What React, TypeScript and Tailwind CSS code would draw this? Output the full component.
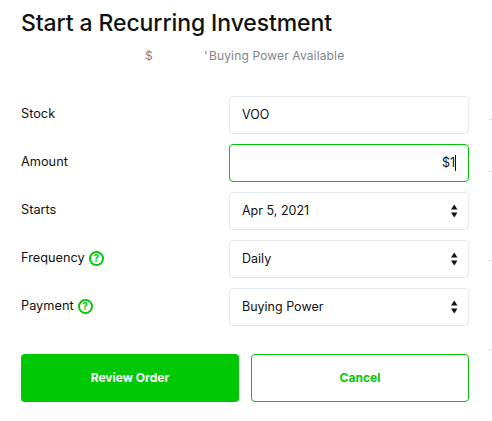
function Arrows() {
	return (
		<svg width="8" height="14" viewBox="0 0 8 14" className="shrink-0">
			<path d="M4.25 0.5 L7.5 5.5 H1 Z" fill="#111" />
			<path d="M4.25 13.5 L7.5 8.5 H1 Z" fill="#111" />
		</svg>
	);
}

function Help() {
	return (
		<span className="ml-[4px] flex h-[15px] w-[15px] items-center justify-center rounded-full border-2 border-[#00c805] text-[10px] font-bold leading-none text-[#00c805]">
			?
		</span>
	);
}

function Row({
	label,
	help,
	children,
}: {
	label: string;
	help?: boolean;
	children: React.ReactNode;
}) {
	return (
		<div className="flex h-[38px] items-center justify-between">
			<div className="flex items-center pb-[2px] text-[12.75px] text-[#111]">
				{label}
				{help && <Help />}
			</div>
			{children}
		</div>
	);
}

function Select({ value }: { value: string }) {
	return (
		<div className="flex h-[38px] w-[240px] items-center justify-between rounded border border-[#e3e9ed] pl-3 pr-[10px] text-[12.5px] text-[#111]">
			<span>{value}</span>
			<Arrows />
		</div>
	);
}

export default function App() {
	return (
		<div
			className="relative h-[421px] w-[492px] overflow-hidden bg-white pl-[21px] pr-[23px] pt-[8px]"
			style={{ fontFamily: "Inter, sans-serif" }}
		>
			<h1 className="text-[23px] font-[450] leading-[30px] tracking-[-0.1px] text-[#111]">
				Start a Recurring Investment
			</h1>
			<div className="mt-[9px] flex h-[18px] items-center text-[12px] tracking-[0.14px] text-[#7c868c]">
				<span className="ml-[124px] w-[59px]">$</span>
				<span className="w-[5px]">'</span>
				<span>Buying Power Available</span>
			</div>
			<div className="mt-[31px] flex flex-col gap-[10px]">
				<Row label="Stock">
					<div className="flex h-[38px] w-[240px] items-center rounded border border-[#e3e9ed] px-3 text-[12.5px] text-[#111]">
						VOO
					</div>
				</Row>
				<Row label="Amount">
					<div className="flex h-[38px] w-[240px] items-center justify-end rounded border border-[#00c805] pr-3 text-[12.5px] text-[#111]">
						$1
						<span className="h-[16px] w-px bg-[#111]" />
					</div>
				</Row>
				<Row label="Starts">
					<Select value="Apr 5, 2021" />
				</Row>
				<Row label="Frequency" help>
					<Select value="Daily" />
				</Row>
				<Row label="Payment" help>
					<Select value="Buying Power" />
				</Row>
			</div>
			<div className="mt-[28px] flex justify-between">
				<button className="h-[48px] w-[218px] rounded bg-[#00c805] text-[12px] font-bold text-white">
					Review Order
				</button>
				<button className="h-[48px] w-[218px] rounded border border-[#00c805] bg-white text-[12px] font-bold text-[#00c805]">
					Cancel
				</button>
			</div>
			{/* stray tick marks on the right edge */}
			<span className="absolute left-[489px] top-[119px] h-px w-[3px] bg-[#dddddd]" />
			<span className="absolute left-[489px] top-[171px] h-px w-[3px] bg-[#dddddd]" />
			<span className="absolute left-[489px] top-[260px] h-px w-[3px] bg-[#dddddd]" />
			<span className="absolute left-[489px] top-[349px] h-px w-[3px] bg-[#dddddd]" />
		</div>
	);
}
